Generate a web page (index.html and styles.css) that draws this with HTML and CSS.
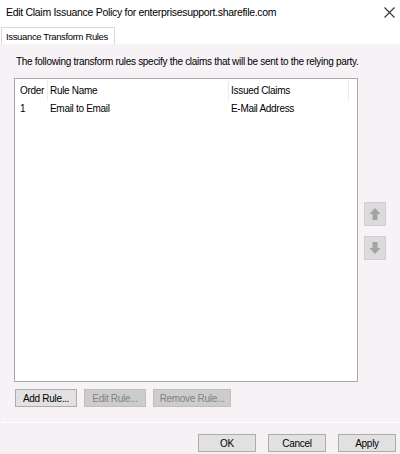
FILE: index.html
```html
<!DOCTYPE html>
<html lang="en">
<head>
  <meta charset="UTF-8" />
  <title>Edit Claim Issuance Policy</title>
  <link rel="stylesheet" href="styles.css">
</head>
<body>
  <div class="dialog">
    <div class="titlebar">
      <span class="title">Edit Claim Issuance Policy for enterprisesupport.sharefile.com</span>
      <svg class="close" width="11" height="11" viewBox="0 0 11 11">
        <path d="M0.5 0.5 L10.5 10.5 M10.5 0.5 L0.5 10.5" stroke="#333" stroke-width="1.1" fill="none"/>
      </svg>
    </div>
    <div class="tabs">
      <div class="tab">Issuance Transform Rules</div>
    </div>
    <div class="panel">
      <p class="intro">The following transform rules specify the claims that will be sent to the relying party.</p>
      <div class="list-row">
        <div class="listbox">
          <div class="row head">
            <span class="col order">Order</span>
            <span class="col name">Rule Name</span>
            <span class="col claims">Issued Claims</span>
            <span class="col filler"></span>
          </div>
          <div class="row">
            <span class="col order">1</span>
            <span class="col name">Email to Email</span>
            <span class="col claims">E-Mail Address</span>
          </div>
        </div>
        <div class="movers">
          <button class="move" disabled>
            <svg width="12" height="14" viewBox="0 0 12 14"><path d="M6 1 L11.5 7 H8.5 V13 H3.5 V7 H0.5 Z" fill="#a3a3a3"/></svg>
          </button>
          <button class="move" disabled>
            <svg width="12" height="14" viewBox="0 0 12 14"><path d="M6 13 L11.5 7 H8.5 V1 H3.5 V7 H0.5 Z" fill="#a3a3a3"/></svg>
          </button>
        </div>
      </div>
      <div class="rule-btns">
        <button class="btn">Add Rule...</button>
        <button class="btn" disabled>Edit Rule...</button>
        <button class="btn wide" disabled>Remove Rule...</button>
      </div>
    </div>
    <div class="footer">
      <button class="btn foot">OK</button>
      <button class="btn foot">Cancel</button>
      <button class="btn foot">Apply</button>
    </div>
  </div>
</body>
</html>
```

FILE: styles.css
```css
* {
  box-sizing: border-box;
}
body {
  margin: 0;
  font-family: "Liberation Sans", Arial, sans-serif;
  font-size: 10px;
  color: #000;
  background: #f4f0f4;
}
.dialog {
  width: 400px;
  height: 454px;
  display: flex;
  flex-direction: column;
  background: #f4f0f4;
}
.titlebar {
  height: 25px;
  background: #fff;
  display: flex;
  align-items: center;
  justify-content: space-between;
  padding: 0 5px 1px 6px;
}
.title {
  font-size: 10.5px;
  letter-spacing: -0.3px;
}
.tabs {
  height: 19px;
  background: #fff;
  display: flex;
  align-items: flex-end;
  padding-left: 1px;
}
.tab {
  height: 17px;
  width: 114px;
  border: 1px solid #d9d9d9;
  border-bottom: none;
  background: #fff;
  padding: 3px 0 0 4px;
  white-space: nowrap;
  font-size: 9.5px;
  letter-spacing: -0.35px;
}
.panel {
  height: 379px;
  margin-left: 1px;
  background: #f6f2f6;
  border-bottom: 1px solid #fff;
  padding: 12px 0 0 13px;
  display: flex;
  flex-direction: column;
}
.intro {
  margin: 0 0 11px 2px;
  letter-spacing: -0.3px;
}
.list-row {
  display: flex;
  align-items: center;
}
.listbox {
  width: 344px;
  height: 304px;
  background: #fff;
  border: 1px solid #a9a9ad;
}
.row {
  display: flex;
  height: 17px;
  align-items: center;
  letter-spacing: -0.3px;
}
.row.head {
  height: 21px;
  padding-top: 1px;
}
.col {
  height: 100%;
  display: flex;
  align-items: center;
  padding-left: 2px;
}
.head .col {
  border-right: 1px solid #ececec;
}
.order {
  width: 33px;
  padding-left: 5px;
}
.name {
  width: 181px;
}
.claims {
  width: 120px;
}
.filler {
  width: 1px;
  padding: 0;
}
.head .filler {
  border-right: none;
}
.movers {
  display: flex;
  flex-direction: column;
  gap: 10px;
  margin-left: 6px;
  padding-top: 2px;
}
.move {
  width: 22px;
  height: 24px;
  padding: 0;
  background: #dcdadc;
  border: 1px solid #d0ced0;
  display: flex;
  align-items: center;
  justify-content: center;
}
.rule-btns {
  display: flex;
  gap: 7px;
  margin-top: 7px;
  padding-left: 1px;
}
.btn {
  height: 18px;
  width: 62px;
  padding: 0;
  font-family: "Liberation Sans", Arial, sans-serif;
  font-size: 10px;
  letter-spacing: -0.3px;
  color: #000;
  background: #e1e1e1;
  border: 1px solid #adadad;
}
.btn:disabled {
  background: #cccccc;
  border-color: #bfbfbf;
  color: #838383;
}
.btn.wide {
  width: 78px;
}
.footer {
  flex: 1;
  display: flex;
  justify-content: flex-end;
  align-items: flex-start;
  gap: 12px;
  padding: 11px 4px 0 0;
}
.btn.foot {
  width: 58px;
  height: 18px;
}
```
